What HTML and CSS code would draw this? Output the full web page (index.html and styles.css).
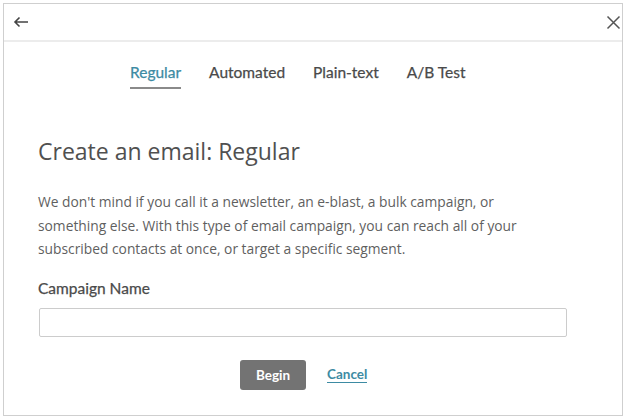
FILE: index.html
```html
<!DOCTYPE html>
<html>
<head>
<meta charset="utf-8">
<link rel="stylesheet" href="styles.css">
</head>
<body>
<div class="frame">
  <div class="header">
    <svg class="icon" width="16" height="12" viewBox="0 0 16 12"><path d="M15 6H2M6.5 1.5L2 6l4.5 4.5" fill="none" stroke="#444" stroke-width="1.6"/></svg>
    <svg class="icon" width="15" height="15" viewBox="0 0 15 15"><path d="M1.5 1.5l12 12M13.5 1.5l-12 12" fill="none" stroke="#555" stroke-width="1.5"/></svg>
  </div>
  <nav class="tabs">
    <span class="tab active">Regular</span>
    <span class="tab">Automated</span>
    <span class="tab">Plain-text</span>
    <span class="tab">A/B Test</span>
  </nav>
  <main class="content">
    <h1 class="title">Create an email: Regular</h1>
    <p class="desc">We don't mind if you call it a newsletter, an e-blast, a bulk campaign, or something else. With this type of email campaign, you can reach all of your subscribed contacts at once, or target a specific segment.</p>
    <label class="label">Campaign Name</label>
    <input class="field" type="text">
    <div class="actions">
      <button class="btn">Begin</button>
      <a class="cancel" href="#">Cancel</a>
    </div>
  </main>
</div>
</body>
</html>
```
FILE: styles.css
```css
html, body { margin: 0; padding: 0; background: #fff; }
body { font-family: "Open Sans", sans-serif; }
.frame {
  margin: 3px 0 0 3px;
  width: 618px;
  height: 411px;
  border: 1px solid #cfcfcf;
  display: flex;
  flex-direction: column;
}
.header {
  height: 36px;
  border-bottom: 2px solid #ececec;
  display: flex;
  justify-content: space-between;
  align-items: center;
  padding: 0 1px 0 9px;
}
.tabs {
  display: flex;
  gap: 28px;
  padding: 21px 0 0 126px;
  font-family: "Lato", sans-serif;
  font-size: 15.5px;
  font-weight: 400;
  color: #4a4a4a;
  -webkit-text-stroke: 0.25px currentColor;
}
.tab { padding-bottom: 6px; border-bottom: 2px solid transparent; }
.tab.active { color: #3d8ba3; border-bottom-color: #8a8a8a; }
.content { padding: 0 0 0 34px; }
.title {
  margin: 47px 0 0 0;
  font-size: 23px;
  font-weight: 400;
  color: #505050;
  line-height: 30px;
}
.desc {
  margin: 24px 0 0 0;
  width: 500px;
  font-size: 13.8px;
  line-height: 23.5px;
  color: #5f5f5f;
}
.label {
  display: block;
  margin-top: 18px;
  font-family: "Lato", sans-serif;
  font-size: 15.5px;
  font-weight: 400;
  color: #4a4a4a;
  -webkit-text-stroke: 0.25px currentColor;
}
.field {
  display: block;
  margin: 11px 0 0 1px;
  width: 528px;
  height: 29px;
  box-sizing: border-box;
  border: 1.5px solid #cccccc;
  border-radius: 2px;
}
.actions {
  display: flex;
  align-items: center;
  gap: 21px;
  margin: 23px 0 0 202px;
}
.btn {
  width: 66px;
  height: 30px;
  border: none;
  border-radius: 3px;
  background: #737373;
  color: #fff;
  font-family: "Lato", sans-serif;
  font-weight: 700;
  font-size: 13.5px;
}
.cancel {
  color: #3d8ba3;
  font-family: "Lato", sans-serif;
  font-weight: 700;
  font-size: 13.5px;
  text-decoration: none;
  border-bottom: 1.5px solid #3d8ba3;
  line-height: 15px;
}
```
